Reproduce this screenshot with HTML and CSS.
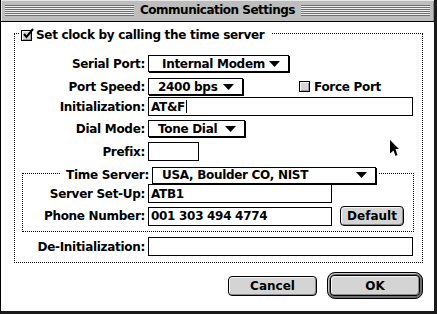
FILE: index.html
```html
<!DOCTYPE html>
<html>
<head>
	<title>Communication Settings</title>
	<meta charset="utf-8">
	<link rel="stylesheet" href="styles.css">
</head>
<body>

	<div class="window">

		<div class="titlebar">
			<span class="stripes"></span>
			<h1>Communication Settings</h1>
			<span class="stripes"></span>
		</div>

		<div class="content">

			<div class="group">

				<div class="group-title">
					<label class="check check-title">
						<span class="checkbox">
							<svg class="tick" width="13" height="13" viewBox="0 0 13 13"><path d="M3 6 L5.5 9 L12 1" fill="none" stroke="#000" stroke-width="2"/></svg>
						</span>
						Set clock by calling the time server
					</label>
				</div>

				<div class="row row-serial">
					<span class="label">Serial Port:</span>
					<span class="popup popup-serial">
						<span>Internal Modem</span>
						<svg class="arrow" width="11" height="6" viewBox="0 0 11 6"><path d="M0 0 H11 L5.5 6 Z"/></svg>
					</span>
				</div>

				<div class="row row-speed">
					<span class="label">Port Speed:</span>
					<span class="popup popup-speed">
						<span>2400 bps</span>
						<svg class="arrow" width="11" height="6" viewBox="0 0 11 6"><path d="M0 0 H11 L5.5 6 Z"/></svg>
					</span>
					<label class="check check-force">
						<span class="checkbox"></span>
						Force Port
					</label>
				</div>

				<div class="row row-init">
					<span class="label">Initialization:</span>
					<span class="field field-wide">AT&amp;F<span class="caret"></span></span>
				</div>

				<div class="row row-dial">
					<span class="label">Dial Mode:</span>
					<span class="popup popup-dial">
						<span>Tone Dial</span>
						<svg class="arrow" width="11" height="6" viewBox="0 0 11 6"><path d="M0 0 H11 L5.5 6 Z"/></svg>
					</span>
				</div>

				<div class="row row-prefix">
					<span class="label">Prefix:</span>
					<span class="field field-prefix"></span>
				</div>

				<div class="group group-inner">

					<div class="row group-title row-server">
						<span class="label"><span>Time Server:</span></span>
						<span class="popup popup-server">
							<span>USA, Boulder CO, NIST</span>
							<svg class="arrow" width="11" height="6" viewBox="0 0 11 6"><path d="M0 0 H11 L5.5 6 Z"/></svg>
						</span>
					</div>

					<div class="row row-setup">
						<span class="label">Server Set-Up:</span>
						<span class="field field-mid">ATB1</span>
					</div>

					<div class="row row-phone">
						<span class="label">Phone Number:</span>
						<span class="field field-mid">001 303 494 4774</span>
						<button class="btn btn-small">Default</button>
					</div>

				</div>

				<div class="row row-deinit">
					<span class="label">De-Initialization:</span>
					<span class="field field-wide"></span>
				</div>

			</div>

			<div class="buttons">
				<button class="btn btn-cancel">Cancel</button>
				<span class="default-ring"><button class="btn btn-ok">OK</button></span>
			</div>

		</div>

		<svg class="pointer" width="10" height="17" viewBox="0 0 10 17"><path d="M0 0 L9 9 L5.5 9 L7.5 15 L5.5 16 L3.5 10.5 L0 13.5 Z"/></svg>

	</div>

</body>
</html>
```

FILE: styles.css
```css
body {
	margin: 0;
	font-family: "DejaVu Sans", sans-serif;
	font-weight: bold;
	font-size: 12px;
	letter-spacing: -0.3px;
	color: #000;
}

*,
*:before,
*:after {
	box-sizing: border-box;
}

.window {
	position: relative;
	width: 437px;
	height: 314px;
	background: #fff;
	border-left: 1px solid #000;
	border-right: 3px solid #1a1a1a;
	border-bottom: 3px solid #1a1a1a;
	overflow: hidden;
}

/**
 * Title bar
 */
.titlebar {
	display: flex;
	align-items: center;
	height: 22px;
	padding: 0 4px 1px;
	background: #bdbdbd;
	border-bottom: 1px solid #000;
	box-shadow: inset 1px 1px 0 #e8e8e8, inset -1px 0 0 #8a8a8a;
}

.stripes {
	flex: 1;
	height: 11px;
	background: repeating-linear-gradient(to bottom, #6e6e6e 0 1px, #eeeeee 1px 2px);
}

.titlebar h1 {
	margin: 0 6px;
	font-size: 12px;
	font-weight: bold;
	letter-spacing: -0.5px;
	line-height: 1;
}

/**
 * Content and dotted groups
 */
.content {
	padding: 11px 0 0 13px;
}

.group {
	width: 409px;
	border: 1px dotted #000;
	padding-bottom: 6px;
}

.group-inner {
	width: 392px;
	margin: 12px 0 0 7px;
	padding-bottom: 5px;
}

.group > .group-title:first-child {
	display: flex;
	align-items: center;
	height: 12px;
	margin-top: -5px;
	padding-left: 4px;
}

.check {
	display: flex;
	align-items: center;
	gap: 4px;
	white-space: nowrap;
}

.check-title {
	width: 253px;
	height: 12px;
	padding-left: 2px;
	background: #fff;
}

.checkbox {
	position: relative;
	width: 11px;
	height: 11px;
	flex: none;
	border: 1px solid #000;
	background: #d6d6d6;
	box-shadow: inset 1px 1px 0 #f4f4f4, inset -1px -1px 0 #9a9a9a;
}

.tick {
	position: absolute;
	left: -1px;
	top: -3px;
}

.check-force {
	margin-left: 56px;
}

/**
 * Rows
 */
.row {
	display: flex;
	align-items: center;
}

.label {
	width: 133px;
	flex: none;
	padding-right: 3px;
	text-align: right;
	white-space: nowrap;
}

.group-inner .label {
	width: 125px;
}

.row-serial { margin-top: 14px; }
.row-speed { margin-top: 6px; }
.row-init { margin-top: 2px; }
.row-dial { margin-top: 4px; }
.row-prefix { margin-top: 5px; }
.row-server { margin-top: -9px; }
.row-setup { margin-top: 3px; }
.row-phone { margin-top: 3px; }
.row-deinit { margin-top: 5px; }

.row-server .label {
	padding-right: 0;
}

.row-server .label span {
	padding: 1px 3px 1px 5px;
	background: #fff;
}

/**
 * Popup menus
 */
.popup {
	display: flex;
	align-items: center;
	justify-content: space-between;
	height: 17px;
	padding: 0 8px 0 9px;
	border: 1px solid #000;
	background: #fff;
	box-shadow: 1px 1px 0 #000;
	white-space: nowrap;
}

.popup-serial { width: 141px; padding-left: 13px; }
.popup-speed { width: 95px; }
.popup-dial { width: 97px; }
.popup-server {
	width: 224px;
	box-shadow: 1px 1px 0 #000, 3px 0 0 #fff;
}

.arrow {
	flex: none;
}

/**
 * Text fields
 */
.field {
	display: flex;
	align-items: center;
	height: 19px;
	padding-left: 2px;
	border: 1px solid #000;
	background: #fff;
	white-space: nowrap;
}

.field-wide { width: 265px; }
.field-mid { width: 184px; }
.field-prefix { width: 51px; }

.caret {
	display: inline-block;
	width: 1px;
	height: 13px;
	margin-left: 1px;
	background: #000;
}

/**
 * Buttons
 */
.btn {
	height: 20px;
	padding: 0;
	border: 1px solid #000;
	border-radius: 4px;
	background: #d4d4d4;
	box-shadow: inset 1px 1px 0 #f6f6f6, inset -1px -1px 0 #8c8c8c;
	font: inherit;
	color: #000;
}

.btn-small {
	width: 64px;
	margin-left: 8px;
}

.buttons {
	display: flex;
	align-items: center;
	justify-content: flex-end;
	gap: 10px;
	width: 409px;
	margin-top: 9px;
}

.btn-cancel {
	width: 89px;
}

.default-ring {
	display: flex;
	padding: 2px;
	border: 1px solid #000;
	border-radius: 8px;
	background: #6e6e6e;
	box-shadow: inset 1px 1px 0 #c8c8c8;
}

.btn-ok {
	width: 90px;
	height: 21px;
}

.pointer {
	position: absolute;
	left: 389px;
	top: 140px;
}
```
